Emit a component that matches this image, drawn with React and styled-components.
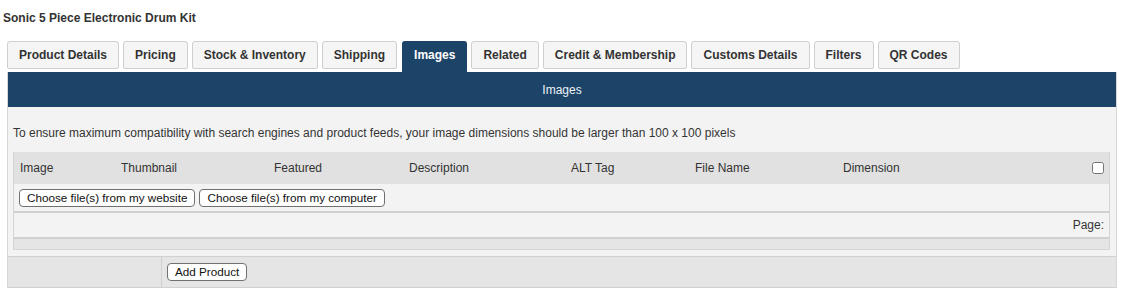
import styled, { createGlobalStyle } from 'styled-components';

const GlobalStyle = createGlobalStyle`
  body { margin: 0; background: #fff; font-family: 'Liberation Sans', Arial, sans-serif; color: #333; }
`;

const tabs = ['Product Details', 'Pricing', 'Stock & Inventory', 'Shipping', 'Images', 'Related', 'Credit & Membership', 'Customs Details', 'Filters', 'QR Codes'];

const columns = [
  { label: 'Image', width: 101 },
  { label: 'Thumbnail', width: 153 },
  { label: 'Featured', width: 135 },
  { label: 'Description', width: 162 },
  { label: 'ALT Tag', width: 124 },
  { label: 'File Name', width: 148 },
  { label: 'Dimension', width: 0 },
];

const Page = styled.div` padding: 11px 6px 0 3px; width: 1114px; `;
const Title = styled.h1` margin: 0 0 16px 0; font-size: 12px; font-weight: bold; color: #333; line-height: 14px; `;

const TabBar = styled.div` display: flex; align-items: flex-start; gap: 4px; margin-left: 4px; height: 31px; `;
const Tab = styled.div`
  height: ${p => (p.$active ? '31px' : '28px')};
  box-sizing: border-box;
  padding: 0 11px;
  display: flex; align-items: ${p => (p.$active ? 'flex-start' : 'center')};
  padding-top: ${p => (p.$active ? '6px' : '0')};
  font-size: 12px; font-weight: bold;
  color: ${p => (p.$active ? '#fff' : '#333')};
  background: ${p => (p.$active ? '#1c4469' : '#f5f5f5')};
  border: 1px solid ${p => (p.$active ? '#1c4469' : '#cfcfcf')};
  border-bottom: ${p => (p.$active ? 'none' : '1px solid #cfcfcf')};
  border-radius: 3px 3px ${p => (p.$active ? '0 0' : '2px 2px')};
  margin-left: ${p => (p.$active ? '1px' : '0')};
  cursor: pointer;
`;

const Frame = styled.div` margin-left: 4px; width: 1110px; border-left: 1px solid #d6d6d6; border-right: 1px solid #d6d6d6; box-sizing: border-box; `;
const PanelHead = styled.div` height: 35px; background: #1c4469; color: #eef2f6; font-size: 12px; display: flex; align-items: center; justify-content: center; `;
const PanelBody = styled.div` background: #f3f3f3; padding: 19px 5px 6px 5px; border-bottom: 1px solid #d0d0d0; `;
const Note = styled.p` margin: 0 0 12px 0; font-size: 12px; line-height: 14px; color: #333; `;

const Table = styled.div` border: 1px solid #d4d4d4; border-top: none; margin-right: 1px; `;
const HeadRow = styled.div` display: flex; align-items: center; height: 32px; background: #e1e1e1; font-size: 12px; color: #333; `;
const HeadCell = styled.div` box-sizing: border-box; padding-left: 6px; flex: ${p => (p.$w ? `0 0 ${p.$w}px` : '1 1 auto')}; `;
const CheckCell = styled.div` padding-right: 5px; display: flex; align-items: center; `;
const Check = styled.input` margin: 0; width: 12px; height: 12px; `;

const ButtonRow = styled.div` display: flex; gap: 4px; align-items: center; height: 29px; padding-left: 5px; border-bottom: 2px solid #d0d0d0; box-sizing: border-box; `;
const PagerRow = styled.div` height: 26px; display: flex; align-items: center; justify-content: flex-end; padding-right: 5px; font-size: 12px; color: #333; border-bottom: 2px solid #d0d0d0; box-sizing: border-box; `;
const EmptyRow = styled.div` height: 10px; background: #e5e5e5; `;

const Button = styled.button`
  font-family: 'Liberation Sans', Arial, sans-serif; font-size: 11.7px; color: #111;
  background: #fff; border: 1px solid #707070; border-radius: 4px;
  height: 18px; padding: 0 7px; line-height: 16px; cursor: pointer;
`;

const Footer = styled.div` display: flex; height: 30px; background: #e5e5e5; border-bottom: 1px solid #d0d0d0; `;
const FooterLabel = styled.div` flex: 0 0 153px; border-right: 1px solid #d0d0d0; `;
const FooterAction = styled.div` display: flex; align-items: center; padding-left: 5px; `;

export default function App() {
  return (
    <>
      <GlobalStyle />
      <Page>
        <Title>Sonic 5 Piece Electronic Drum Kit</Title>
        <TabBar>
          {tabs.map(t => (
            <Tab key={t} $active={t === 'Images'}>{t}</Tab>
          ))}
        </TabBar>
        <Frame>
          <PanelHead>Images</PanelHead>
          <PanelBody>
            <Note>To ensure maximum compatibility with search engines and product feeds, your image dimensions should be larger than 100 x 100 pixels</Note>
            <Table>
              <HeadRow>
                {columns.map(c => (
                  <HeadCell key={c.label} $w={c.width}>{c.label}</HeadCell>
                ))}
                <CheckCell><Check type="checkbox" /></CheckCell>
              </HeadRow>
              <ButtonRow>
                <Button>Choose file(s) from my website</Button>
                <Button>Choose file(s) from my computer</Button>
              </ButtonRow>
              <PagerRow>Page:</PagerRow>
              <EmptyRow />
            </Table>
          </PanelBody>
          <Footer>
            <FooterLabel />
            <FooterAction><Button>Add Product</Button></FooterAction>
          </Footer>
        </Frame>
      </Page>
    </>
  );
}
